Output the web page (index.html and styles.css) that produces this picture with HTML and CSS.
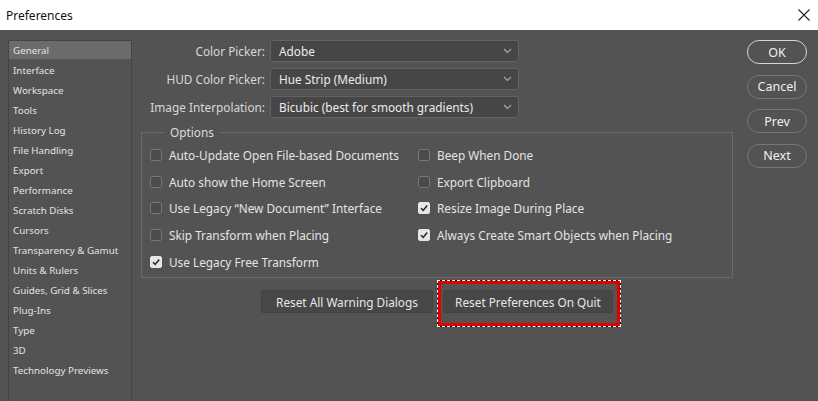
FILE: index.html
```html
<!DOCTYPE html>
<html>
<head>
<meta charset="utf-8">
<link rel="stylesheet" href="styles.css">
</head>
<body>
<div class="titlebar">
  <span class="title">Preferences</span>
  <svg class="close" width="12" height="12" viewBox="0 0 12 12"><path d="M0.5 0.5 L11.5 11.5 M11.5 0.5 L0.5 11.5" stroke="#222" stroke-width="1.1" fill="none"/></svg>
</div>
<div class="main">
  <ul class="sidebar">
    <li class="selected">General</li>
    <li>Interface</li>
    <li>Workspace</li>
    <li>Tools</li>
    <li>History Log</li>
    <li>File Handling</li>
    <li>Export</li>
    <li>Performance</li>
    <li>Scratch Disks</li>
    <li>Cursors</li>
    <li>Transparency &amp; Gamut</li>
    <li>Units &amp; Rulers</li>
    <li>Guides, Grid &amp; Slices</li>
    <li>Plug-Ins</li>
    <li>Type</li>
    <li>3D</li>
    <li>Technology Previews</li>
  </ul>
  <div class="content">
    <div class="form">
      <label class="flabel">Color Picker:</label>
      <div class="select"><span>Adobe</span><svg class="chev" width="9" height="6" viewBox="0 0 9 6"><path d="M1 1 L4.5 4.5 L8 1" stroke="#a8a8a8" stroke-width="1.2" fill="none"/></svg></div>
      <label class="flabel">HUD Color Picker:</label>
      <div class="select"><span>Hue Strip (Medium)</span><svg class="chev" width="9" height="6" viewBox="0 0 9 6"><path d="M1 1 L4.5 4.5 L8 1" stroke="#a8a8a8" stroke-width="1.2" fill="none"/></svg></div>
      <label class="flabel">Image Interpolation:</label>
      <div class="select"><span>Bicubic (best for smooth gradients)</span><svg class="chev" width="9" height="6" viewBox="0 0 9 6"><path d="M1 1 L4.5 4.5 L8 1" stroke="#a8a8a8" stroke-width="1.2" fill="none"/></svg></div>
    </div>
    <fieldset class="options">
      <legend>Options</legend>
      <div class="grid">
        <div class="opt"><span class="cb"></span>Auto-Update Open File-based Documents</div>
        <div class="opt"><span class="cb"></span>Beep When Done</div>
        <div class="opt"><span class="cb"></span>Auto show the Home Screen</div>
        <div class="opt"><span class="cb"></span>Export Clipboard</div>
        <div class="opt"><span class="cb"></span>Use Legacy “New Document” Interface</div>
        <div class="opt"><span class="cb checked"><svg width="10" height="10" viewBox="0 0 10 10"><path d="M2 5.2 L4.2 7.4 L8.2 2.6" stroke="#2a2a2a" stroke-width="1.6" fill="none"/></svg></span>Resize Image During Place</div>
        <div class="opt"><span class="cb"></span>Skip Transform when Placing</div>
        <div class="opt"><span class="cb checked"><svg width="10" height="10" viewBox="0 0 10 10"><path d="M2 5.2 L4.2 7.4 L8.2 2.6" stroke="#2a2a2a" stroke-width="1.6" fill="none"/></svg></span>Always Create Smart Objects when Placing</div>
        <div class="opt"><span class="cb checked"><svg width="10" height="10" viewBox="0 0 10 10"><path d="M2 5.2 L4.2 7.4 L8.2 2.6" stroke="#2a2a2a" stroke-width="1.6" fill="none"/></svg></span>Use Legacy Free Transform</div>
      </div>
    </fieldset>
    <div class="resets">
      <button class="btn wide">Reset All Warning Dialogs</button>
      <span class="marked"><button class="btn">Reset Preferences On Quit</button></span>
    </div>
  </div>
  <div class="actions">
    <button class="pill default">OK</button>
    <button class="pill">Cancel</button>
    <button class="pill">Prev</button>
    <button class="pill">Next</button>
  </div>
</div>
</body>
</html>
```
FILE: styles.css
```css
html, body {
  margin: 0;
  padding: 0;
  background: #535353;
  font-family: "Noto Sans", "DejaVu Sans", sans-serif;
  overflow: hidden;
}
.titlebar {
  height: 30px;
  background: #ffffff;
  display: flex;
  align-items: center;
  justify-content: space-between;
  padding: 0 8px 0 6px;
  box-sizing: border-box;
}
.title {
  font-size: 12px;
  color: #111;
}
.main {
  display: flex;
  align-items: flex-start;
  padding-top: 10px;
  height: 371px;
  box-sizing: border-box;
}
.sidebar {
  list-style: none;
  margin: 0 0 0 8px;
  padding: 0;
  width: 124px;
  height: 380px;
  box-sizing: border-box;
  border: 1px solid #444444;
  background: #535353;
  flex-shrink: 0;
}
.sidebar li {
  height: 20px;
  line-height: 22px;
  padding-left: 4px;
  font-size: 9.8px;
  color: #e2e2e2;
  white-space: nowrap;
  overflow: hidden;
}
.sidebar li.selected {
  background: #6b6b6b;
  height: 18px;
  line-height: 20px;
  margin-bottom: 1px;
}
.content {
  margin-left: 9px;
  width: 592px;
  display: flex;
  flex-direction: column;
  flex-shrink: 0;
}
.form {
  display: grid;
  grid-template-columns: 124px 249px;
  column-gap: 5px;
  row-gap: 6px;
  align-items: center;
}
.flabel {
  text-align: right;
  font-size: 11.8px;
  color: #d8d8d8;
  white-space: nowrap;
}
.select {
  height: 22px;
  box-sizing: border-box;
  border: 1px solid #626262;
  border-radius: 3px;
  background: #464646;
  display: flex;
  align-items: center;
  justify-content: space-between;
  padding: 0 6px 0 8px;
  font-size: 11.8px;
  color: #ececec;
}
.options {
  margin: 6px 0 0 0;
  padding: 0 0 0 8px;
  border: 1px solid #6a6a6a;
  border-radius: 0;
  height: 154px;
  box-sizing: border-box;
}
.options legend {
  font-size: 11.8px;
  color: #dcdcdc;
  padding: 0 6px;
  margin-left: 14px;
  line-height: 16px;
}
.grid {
  display: grid;
  grid-template-columns: 268px 1fr;
  grid-auto-rows: 26.6px;
  align-items: center;
  margin-top: 2px;
}
.opt {
  display: flex;
  align-items: center;
  font-size: 11.8px;
  color: #e4e4e4;
  white-space: nowrap;
}
.cb {
  width: 12px;
  height: 12px;
  box-sizing: border-box;
  border: 1px solid #777777;
  border-radius: 2px;
  background: #4b4b4b;
  margin-right: 7px;
  display: flex;
  align-items: center;
  justify-content: center;
}
.cb.checked {
  background: #e6e6e6;
  border-color: #e6e6e6;
}
.resets {
  display: flex;
  justify-content: center;
  align-items: center;
  gap: 10px;
  margin-top: 12px;
}
.btn {
  height: 23px;
  box-sizing: border-box;
  border: 1px solid #434343;
  border-radius: 2px;
  background: #474747;
  color: #e8e8e8;
  font-family: "Noto Sans", "DejaVu Sans", sans-serif;
  font-size: 11.8px;
  padding: 0;
  width: 170px;
  white-space: nowrap;
  display: block;
}
.btn.wide {
  width: 172px;
}
.marked {
  position: relative;
  display: block;
}
.marked::after {
  content: "";
  position: absolute;
  left: -5px;
  right: -7px;
  top: -9px;
  bottom: -13px;
  border: 3px solid #e00000;
  outline: 1px dashed #ffffff;
  box-shadow: 0 0 0 1px #000000;
  pointer-events: none;
}
.actions {
  margin-left: 14px;
  display: flex;
  flex-direction: column;
  gap: 10.5px;
}
.pill {
  width: 60px;
  height: 24px;
  box-sizing: border-box;
  border: 1px solid #777777;
  border-radius: 12px;
  background: transparent;
  color: #f0f0f0;
  font-family: "Noto Sans", "DejaVu Sans", sans-serif;
  font-size: 12.5px;
  padding: 0;
}
.pill.default {
  border: 1.5px solid #d6d6d6;
}
```
